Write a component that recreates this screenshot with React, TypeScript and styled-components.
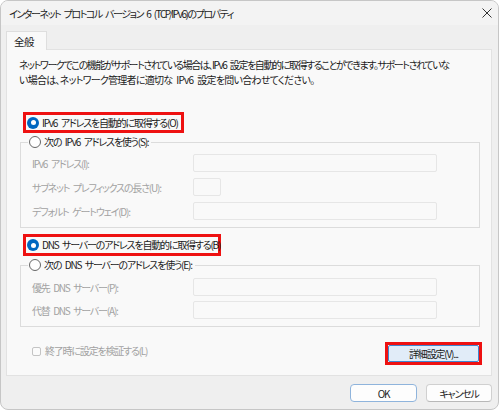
import React from "react";
import styled, { createGlobalStyle, css } from "styled-components";

const GlobalStyle = createGlobalStyle`
  html, body {
    margin: 0;
    padding: 0;
    background: #ffffff;
  }
  body {
    font-family: "Noto Sans CJK JP", "Noto Sans", sans-serif;
    font-feature-settings: "palt";
    color: #1b1b1b;
  }
  * { box-sizing: border-box; }
`;

// shared dialog text metrics (narrow UI face)
const dialogText = css`
  font-size: 10px;
  letter-spacing: -1.2px;
  word-spacing: 2.5px;
  white-space: nowrap;
`;

const Window = styled.div`
  width: 499px;
  height: 410px;
  border: 1px solid #c6c6c6;
  border-radius: 8px;
  overflow: hidden;
  background: #efefef;
  display: flex;
  flex-direction: column;
`;

const TitleBar = styled.div`
  height: 24px;
  flex: none;
  background: #f3f3f3;
  display: flex;
  align-items: center;
  justify-content: space-between;
  padding: 0 6px 0 8px;
  font-size: 10px;
  letter-spacing: -1.45px;
  word-spacing: 2.5px;
  white-space: nowrap;
  color: #1b1b1b;
`;

const CloseGlyph = styled.svg`
  width: 10px;
  height: 10px;
`;

const Body = styled.div`
  padding: 6px 6px 0 5px;
  display: flex;
  flex-direction: column;
`;

const TabStrip = styled.div`
  display: flex;
`;

const Tab = styled.div`
  width: 41px;
  height: 19px;
  margin-bottom: -1px;
  position: relative;
  z-index: 1;
  background: #f9f9f9;
  border: 1px solid #dedede;
  border-bottom: none;
  font-size: 10.5px;
  letter-spacing: -0.5px;
  line-height: 16px;
  padding: 2px 0 0 7px;
`;

const Panel = styled.div`
  width: 486px;
  height: 327px;
  flex: none;
  background: #f9f9f9;
  border: 1px solid #e2e2e2;
  padding: 7px 9px 0 12px;
  display: flex;
  flex-direction: column;
  align-items: flex-start;
`;

const Description = styled.div`
  display: flex;
  flex-direction: column;
`;

const DescLine = styled.span<{ $tracking: number }>`
  ${dialogText};
  letter-spacing: ${(p) => p.$tracking}px;
  line-height: 15px;
`;

const Highlight = styled.div<{ $w: number; $h: number; $mt: number; $ml?: number }>`
  width: ${(p) => p.$w}px;
  height: ${(p) => p.$h}px;
  margin-top: ${(p) => p.$mt}px;
  margin-left: ${(p) => p.$ml ?? 0}px;
  border: 3px solid #ee1111;
  display: flex;
  align-items: center;
  flex: none;
`;

const OptionLabel = styled.label`
  ${dialogText};
  display: inline-flex;
  align-items: center;
  gap: 3px;
  line-height: 16px;
  color: #1b1b1b;
  padding-left: 1px;
`;

const RadioDot = styled.span<{ $checked?: boolean }>`
  width: 12px;
  height: 12px;
  border-radius: 50%;
  flex: none;
  position: relative;
  ${(p) =>
    p.$checked
      ? css`
          background: #0067c0;
          &::after {
            content: "";
            position: absolute;
            left: 3.5px;
            top: 3.5px;
            width: 5px;
            height: 5px;
            border-radius: 50%;
            background: #ffffff;
          }
        `
      : css`
          background: #ffffff;
          border: 1px solid #666666;
        `}
`;

const Group = styled.fieldset<{ $mt: number; $pt: number; $gap: number }>`
  width: 460px;
  flex: none;
  margin: ${(p) => p.$mt}px 0 0 1px;
  padding: ${(p) => p.$pt}px 0 7px 11px;
  border: 1px solid #dcdcdc;
  display: flex;
  flex-direction: column;
  gap: ${(p) => p.$gap}px;
  min-width: 0;
`;

const Legend = styled.legend`
  display: flex;
  height: 16px;
  line-height: 16px;
  margin-left: -4px;
  padding: 0 3px 0 0;
  background: #f9f9f9;
`;

const FieldRow = styled.div`
  display: flex;
  align-items: center;
  height: 18px;
`;

const FieldLabel = styled.span`
  ${dialogText};
  width: 161px;
  color: #a2a2a2;
`;

const FieldBox = styled.div<{ $w: number }>`
  width: ${(p) => p.$w}px;
  height: 18px;
  background: #f9f9f9;
  border: 1px solid #e6e6e6;
  border-radius: 2px;
`;

const FooterRow = styled.div`
  width: 100%;
  margin-top: 15px;
  display: flex;
  justify-content: space-between;
  align-items: flex-start;
`;

const CheckLabel = styled.label`
  ${dialogText};
  display: inline-flex;
  align-items: center;
  gap: 4px;
  margin: 2px 0 0 13px;
  line-height: 14px;
  color: #a2a2a2;
`;

const CheckBox = styled.span`
  width: 9px;
  height: 9px;
  border: 1px solid #c4c4c4;
  border-radius: 2px;
  background: #fbfbfb;
`;

const ActionButton = styled.button<{ $primary?: boolean; $accent?: boolean; $w?: number }>`
  ${dialogText};
  width: ${(p) => (p.$w ? `${p.$w}px` : "100%")};
  height: ${(p) => (p.$accent ? "17px" : "18px")};
  padding: 0;
  font-family: inherit;
  font-feature-settings: "palt";
  color: #1b1b1b;
  border-radius: ${(p) => (p.$accent ? "2px" : "4px")};
  border: 1px solid #d0d0d0;
  border-bottom-color: #b8b8b8;
  background: #fdfdfd;
  display: flex;
  align-items: center;
  justify-content: center;
  ${(p) =>
    p.$primary &&
    css`
      border: 1px solid #8fb4dc;
    `}
  ${(p) =>
    p.$accent &&
    css`
      border: 1px solid #3f86cf;
      background: #e1ecf8;
    `}
`;

const ButtonRow = styled.div`
  display: flex;
  justify-content: flex-end;
  gap: 9px;
  margin-top: 8px;
`;

export default function App() {
  return (
    <>
      <GlobalStyle />
      <Window>
        <TitleBar>
          <span>インターネット プロトコル バージョン 6 (TCP/IPv6)のプロパティ</span>
          <CloseGlyph viewBox="0 0 10 10">
            <path d="M0.5 0.5 L9.5 9.5 M9.5 0.5 L0.5 9.5" stroke="#333" strokeWidth="1" />
          </CloseGlyph>
        </TitleBar>
        <Body>
          <TabStrip>
            <Tab>全般</Tab>
          </TabStrip>
          <Panel>
            <Description>
              <DescLine $tracking={-1.4}>
                ネットワークでこの機能がサポートされている場合は、IPv6 設定を自動的に取得することができます。サポートされていな
              </DescLine>
              <DescLine $tracking={-0.75}>
                い場合は、ネットワーク管理者に適切な IPv6 設定を問い合わせてください。
              </DescLine>
            </Description>

            <Highlight $w={161} $h={21} $mt={25} $ml={4}>
              <OptionLabel>
                <RadioDot $checked />
                IPv6 アドレスを自動的に取得する(O)
              </OptionLabel>
            </Highlight>

            <Group $mt={1} $pt={4} $gap={6}>
              <Legend>
                <OptionLabel>
                  <RadioDot />
                  次の IPv6 アドレスを使う(S):
                </OptionLabel>
              </Legend>
              <FieldRow>
                <FieldLabel>IPv6 アドレス(I):</FieldLabel>
                <FieldBox $w={244} />
              </FieldRow>
              <FieldRow>
                <FieldLabel>サブネット プレフィックスの長さ(U):</FieldLabel>
                <FieldBox $w={28} />
              </FieldRow>
              <FieldRow>
                <FieldLabel>デフォルト ゲートウェイ(D):</FieldLabel>
                <FieldBox $w={244} />
              </FieldRow>
            </Group>

            <Highlight $w={198} $h={22} $mt={6} $ml={4}>
              <OptionLabel>
                <RadioDot $checked />
                DNS サーバーのアドレスを自動的に取得する(B)
              </OptionLabel>
            </Highlight>

            <Group $mt={1} $pt={5} $gap={5}>
              <Legend>
                <OptionLabel>
                  <RadioDot />
                  次の DNS サーバーのアドレスを使う(E):
                </OptionLabel>
              </Legend>
              <FieldRow>
                <FieldLabel>優先 DNS サーバー(P):</FieldLabel>
                <FieldBox $w={244} />
              </FieldRow>
              <FieldRow>
                <FieldLabel>代替 DNS サーバー(A):</FieldLabel>
                <FieldBox $w={244} />
              </FieldRow>
            </Group>

            <FooterRow>
              <CheckLabel>
                <CheckBox />
                終了時に設定を検証する(L)
              </CheckLabel>
              <Highlight $w={97} $h={23} $mt={0}>
                <ActionButton $accent>詳細設定(V)...</ActionButton>
              </Highlight>
            </FooterRow>
          </Panel>
          <ButtonRow>
            <ActionButton $primary $w={67}>OK</ActionButton>
            <ActionButton $w={66}>キャンセル</ActionButton>
          </ButtonRow>
        </Body>
      </Window>
    </>
  );
}
